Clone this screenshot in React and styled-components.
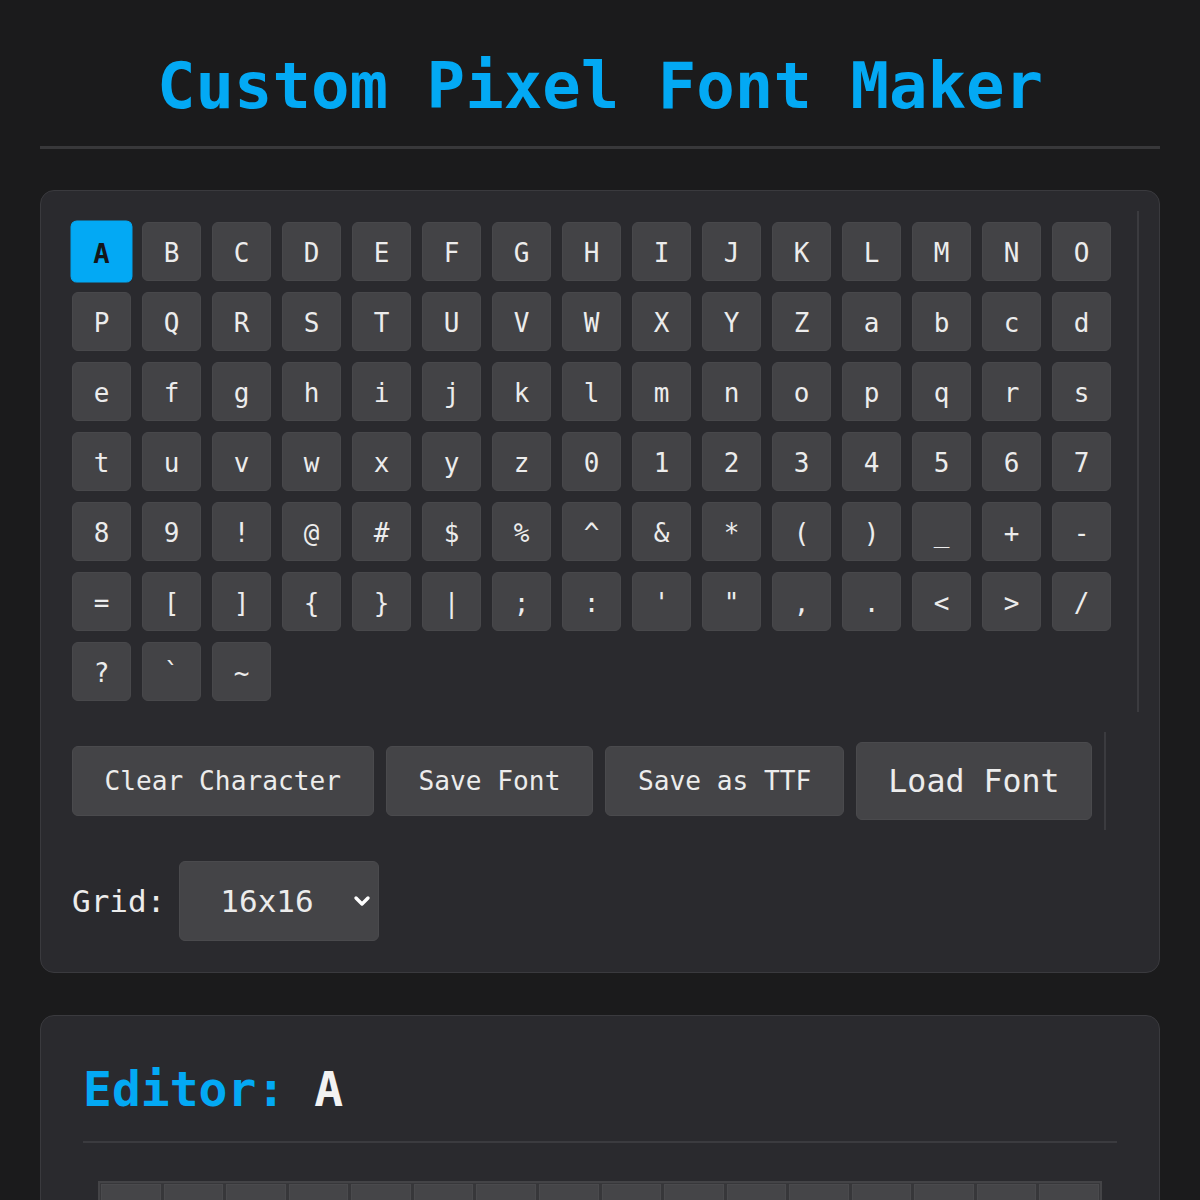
import React, { useState } from 'react';
import styled, { createGlobalStyle } from 'styled-components';
import { ChevronDown } from 'lucide-react';

const GlobalStyle = createGlobalStyle`
  html {
    scrollbar-width: none;
  }
  body {
    margin: 0;
    background-color: #1b1b1c;
    color: #ececec;
    font-family: "DejaVu Sans Mono", "Liberation Mono", monospace;
    overflow: hidden;
  }
`;

const Page = styled.div`
  padding: 48px 40px 0;
`;

const Title = styled.h1`
  margin: 0;
  padding-bottom: 21px;
  border-bottom: 3px solid #38383a;
  color: #03a9f4;
  font-size: 64px;
  line-height: 1.2;
  font-weight: 700;
  text-align: center;
`;

const Panel = styled.section`
  margin-top: ${(p) => p.$gap}px;
  background-color: #2a2a2e;
  border: 1px solid #3a3a3e;
  border-radius: 14px;
  padding: ${(p) => p.$pad}px;
  display: flex;
  flex-direction: column;
  gap: 20px;
`;

const CharSection = styled.div`
  padding: 11px;
  border-right: 2px solid #3b3b3f;
`;

const CharGrid = styled.div`
  display: grid;
  grid-template-columns: repeat(15, 59px);
  grid-auto-rows: 59px;
  gap: 11px;
`;

const CharButton = styled.button`
  display: flex;
  align-items: center;
  justify-content: center;
  padding: 3px 0 0;
  border: 1px solid ${(p) => (p.$active ? '#03a9f4' : '#48484b')};
  border-radius: 6px;
  background-color: ${(p) => (p.$active ? '#03a9f4' : '#434346')};
  color: ${(p) => (p.$active ? '#14161a' : '#ececec')};
  font-family: inherit;
  font-size: 26px;
  font-weight: ${(p) => (p.$active ? 700 : 400)};
  transform: ${(p) => (p.$active ? 'scale(1.05)' : 'none')};
  cursor: pointer;
`;

const ActionRow = styled.div`
  align-self: flex-start;
  display: flex;
  align-items: center;
  gap: 12.5px;
  padding: 10px 12px 10px 11px;
  border-right: 2px solid #3b3b3f;
`;

const ActionButton = styled.button`
  height: ${(p) => (p.$big ? 78 : 70)}px;
  padding: 0 ${(p) => (p.$big ? 31 : 31.5)}px;
  border: 1px solid #4a4a4d;
  border-radius: 6px;
  background-color: #444447;
  color: #ececec;
  font-family: inherit;
  font-size: ${(p) => (p.$big ? 31.6 : 26.2)}px;
  white-space: nowrap;
  cursor: pointer;
`;

const GridRow = styled.div`
  display: flex;
  align-items: center;
  gap: 14px;
  padding: 11px;
`;

const GridLabel = styled.label`
  font-size: 31px;
  color: #ececec;
`;

const SelectWrap = styled.div`
  position: relative;
  width: 200px;
  height: 80px;
`;

const Select = styled.select`
  appearance: none;
  width: 100%;
  height: 100%;
  padding: 0 0 0 40px;
  border: 1px solid #4a4a4d;
  border-radius: 6px;
  background-color: #444447;
  color: #ececec;
  font-family: inherit;
  font-size: 31px;
  outline: none;
`;

const Chevron = styled.span`
  position: absolute;
  right: 5px;
  top: 50%;
  transform: translateY(-50%);
  display: flex;
  color: #ffffff;
  pointer-events: none;
`;

const EditorHeading = styled.h2`
  margin: 0;
  padding: 3px 0 23px;
  border-bottom: 2px solid #3b3b3f;
  font-size: 48px;
  line-height: 1.2;
  font-weight: 700;
  color: #f2f2f2;
`;

const Accent = styled.span`
  color: #03a9f4;
`;

const PixelGrid = styled.div`
  margin: 38px 15px 0;
  display: grid;
  grid-template-columns: repeat(16, 1fr);
  gap: 3px;
  padding: 1px;
  border: 2px solid #444447;
  background-color: #37373a;
`;

const Pixel = styled.div`
  aspect-ratio: 1;
  background-color: #454548;
  border: 1px solid #4a4a4d;
`;

// order of the character picker, row by row as in the app
const CHARS = [
  ...'ABCDEFGHIJKLMNOPQRSTUVWXYZ',
  ...'abcdefghijklmnopqrstuvwxyz',
  ...'0123456789',
  ...'!@#$%^&*()_+-',
  ...'=[]{}|;:\'",.<>/',
  ...'?`~',
];

export default function App() {
  const [selected, setSelected] = useState('A');
  const [size, setSize] = useState('16');
  const n = Number(size);

  return (
    <Page>
      <GlobalStyle />
      <Title>Custom Pixel Font Maker</Title>

      <Panel $gap={41} $pad={20}>
        <CharSection>
          <CharGrid>
            {CHARS.map((c) => (
              <CharButton
                key={c}
                $active={c === selected}
                onClick={() => setSelected(c)}
              >
                {c}
              </CharButton>
            ))}
          </CharGrid>
        </CharSection>

        <ActionRow>
          <ActionButton>Clear Character</ActionButton>
          <ActionButton>Save Font</ActionButton>
          <ActionButton>Save as TTF</ActionButton>
          <ActionButton $big>Load Font</ActionButton>
        </ActionRow>

        <GridRow>
          <GridLabel htmlFor="grid-size">Grid:</GridLabel>
          <SelectWrap>
            <Select
              id="grid-size"
              value={size}
              onChange={(e) => setSize(e.target.value)}
            >
              <option value="8">8x8</option>
              <option value="16">16x16</option>
              <option value="32">32x32</option>
            </Select>
            <Chevron>
              <ChevronDown size={24} strokeWidth={3.4} />
            </Chevron>
          </SelectWrap>
        </GridRow>
      </Panel>

      <Panel $gap={42} $pad={42}>
        <div>
          <EditorHeading>
            <Accent>Editor:</Accent> {selected}
          </EditorHeading>
          <PixelGrid>
            {Array.from({ length: n * n }).map((_, i) => (
              <Pixel key={i} />
            ))}
          </PixelGrid>
        </div>
      </Panel>
    </Page>
  );
}
